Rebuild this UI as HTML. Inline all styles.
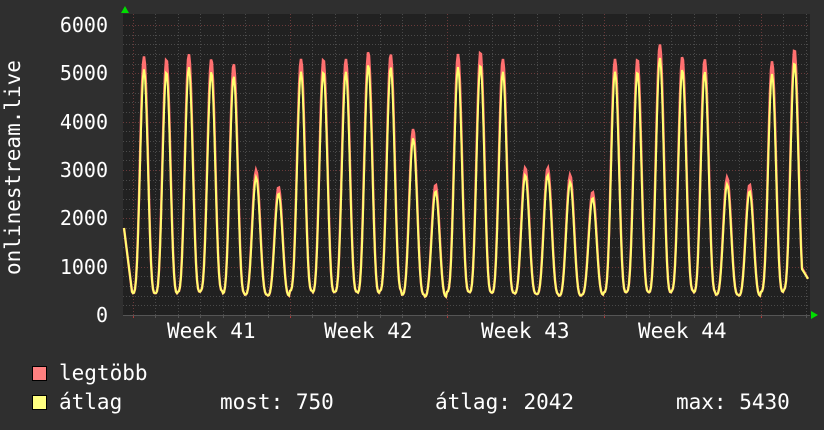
<!DOCTYPE html>
<html><head><meta charset="utf-8"><style>
html,body{margin:0;padding:0;background:#2f2f2f;}
body{width:824px;height:430px;overflow:hidden;position:relative;font-family:"DejaVu Sans Mono","Liberation Mono",monospace;color:#fff;}
.t{position:absolute;font-size:21px;line-height:21px;white-space:pre;}
.yl{position:absolute;right:716px;font-size:20px;line-height:20px;text-align:right;}
.sq{position:absolute;left:32px;width:13px;height:13px;border:1px solid #000;}
</style></head><body>
<svg id="g" width="824" height="430" style="position:absolute;left:0;top:0">
<rect x="123" y="14" width="687" height="302" fill="#212121"/>
<g id="grid"></g>
<g id="data"></g>
<polygon points="121,13 129,13 125,6" fill="#00dd00"/>
<polygon points="811,311 811,319 818,315" fill="#00dd00"/>
</svg>
<div class="yl" style="top:15px">6000</div>
<div class="yl" style="top:63px">5000</div>
<div class="yl" style="top:112px">4000</div>
<div class="yl" style="top:160px">3000</div>
<div class="yl" style="top:208px">2000</div>
<div class="yl" style="top:257px">1000</div>
<div class="yl" style="top:305px">0</div>
<div class="t" style="left:3px;top:275px;transform:rotate(-90deg);transform-origin:0 0;width:0;font-size:21px"><span style="position:absolute;left:0;top:0">onlinestream.live</span></div>
<div class="t" style="left:167px;top:321px">Week 41</div>
<div class="t" style="left:324px;top:321px">Week 42</div>
<div class="t" style="left:481px;top:321px">Week 43</div>
<div class="t" style="left:638px;top:321px">Week 44</div>
<div class="sq" style="top:366px;background:#ff8080"></div>
<div class="sq" style="top:395px;background:#ffff80"></div>
<div class="t" style="left:59px;top:363px">legtöbb</div>
<div class="t" style="left:59px;top:392px">átlag</div>
<div class="t" style="left:220px;top:392px">most: 750</div>
<div class="t" style="left:435px;top:392px">átlag: 2042</div>
<div class="t" style="left:676px;top:392px">max: 5430</div>
<script>
var ns="http://www.w3.org/2000/svg";
function el(p,n,a){var e=document.createElementNS(ns,n);for(var k in a)e.setAttribute(k,a[k]);p.appendChild(e);return e;}
var grid=document.getElementById('grid'),data=document.getElementById('data');
function Y(v){return 315-v*0.04833;}
for(var v=200;v<=6000;v+=200){var y=Math.round(Y(v))+0.5;var maj=v%1000==0;
el(grid,'line',{x1:123,x2:810,y1:y,y2:y,stroke:maj?'#6a3a3a':'#4a4a4a','stroke-width':1,'stroke-dasharray':'1,2'});}
var day=22.43;
for(var i=0;i<31;i++){var x=Math.round(133+i*day)+0.5;if(x>810)break;var wk=(i%7==0);
el(grid,'line',{x1:x,x2:x,y1:14,y2:315,stroke:wk?'#6a3a3a':'#4a4a4a','stroke-width':1,'stroke-dasharray':'1,2'});
el(grid,'line',{x1:x,x2:x,y1:315,y2:318,stroke:wk?'#aa3a3a':'#555','stroke-width':1});}
el(grid,'line',{x1:123,x2:810,y1:315.5,y2:315.5,stroke:'#555'});
var pk=[5350,5300,5400,5300,5200,3000,2650,5300,5300,5300,5450,5400,3850,2700,5400,5450,5300,3050,3050,2900,2550,5300,5300,5600,5350,5300,2850,2700,5250,5500];
var tr=[450,450,480,500,450,420,400,500,470,480,460,500,420,380,480,470,460,440,430,400,420,470,480,470,500,470,420,400,480,520];
function base(x,m){
if(x<=132){return 1800-(x-124)*165;}
var t=(x-144)/day;var k=Math.round(t);var d=t-k;
if(k<0)k=0;if(k>29)k=29;
var p=pk[k]*m;var lo=tr[k];
var f=Math.pow((1+Math.cos(2*Math.PI*d))/2,1.7);
return lo+(p-lo)*f;}
function val(x,m){
if(x>=802){var a=base(802,m);return a+(750-a)*(x-802)/6;}
return base(x,m);}
function path(m){var s='';for(var x=124;x<=808;x+=1){s+=(x==124?'M':'L')+x+','+Y(val(x,m)).toFixed(1);}return s;}
el(data,'path',{d:path(1),fill:'none',stroke:'#ff7070','stroke-width':2.5});
el(data,'path',{d:path(0.95),fill:'none',stroke:'#ffff70','stroke-width':2});
</script>
</body></html>
